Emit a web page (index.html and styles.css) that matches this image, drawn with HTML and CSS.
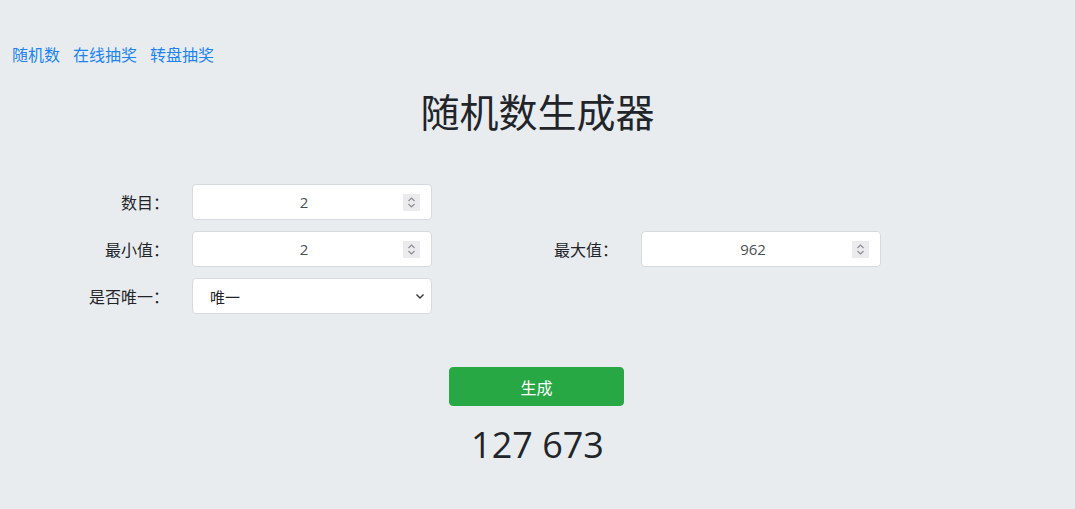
FILE: index.html
```html
<!DOCTYPE html>
<html lang="zh-CN">
<head>
<meta charset="utf-8">
<title>随机数生成器</title>
<link rel="stylesheet" href="styles.css">
</head>
<body>
<nav class="nav">
  <a href="#">随机数</a>
  <a href="#">在线抽奖</a>
  <a href="#">转盘抽奖</a>
</nav>
<h1 class="title">随机数生成器</h1>
<form class="form">
  <label class="label">数目：</label>
  <div class="field">
    <input class="num" type="number" value="2">
    <span class="spin"><svg width="17" height="17" viewBox="0 0 17 17"><path d="M5.5 7 L8.5 4 L11.5 7 M5.5 10 L8.5 13 L11.5 10" fill="none" stroke="#8a8a90" stroke-width="1.1"/></svg></span>
  </div>
  <div class="empty"></div>
  <div class="empty"></div>

  <label class="label">最小值：</label>
  <div class="field">
    <input class="num" type="number" value="2">
    <span class="spin"><svg width="17" height="17" viewBox="0 0 17 17"><path d="M5.5 7 L8.5 4 L11.5 7 M5.5 10 L8.5 13 L11.5 10" fill="none" stroke="#8a8a90" stroke-width="1.1"/></svg></span>
  </div>
  <label class="label">最大值：</label>
  <div class="field">
    <input class="num" type="number" value="962">
    <span class="spin"><svg width="17" height="17" viewBox="0 0 17 17"><path d="M5.5 7 L8.5 4 L11.5 7 M5.5 10 L8.5 13 L11.5 10" fill="none" stroke="#8a8a90" stroke-width="1.1"/></svg></span>
  </div>

  <label class="label">是否唯一：</label>
  <div class="field select-field">
    <select class="sel"><option>唯一</option><option>不唯一</option></select>
    <svg class="chev" width="10" height="8" viewBox="0 0 10 8"><path d="M1.5 2.5 L5 6 L8.5 2.5" fill="none" stroke="#333" stroke-width="1.4"/></svg>
  </div>
</form>
<div class="actions">
  <button class="btn" type="button">生成</button>
</div>
<div class="result">127 673</div>
</body>
</html>
```

FILE: styles.css
```css
html, body {
  margin: 0;
  padding: 0;
}
body {
  background: #e9ecef;
  color: #212529;
  font-family: "Open Sans", "Noto Sans CJK SC", sans-serif;
  font-size: 16px;
  padding-top: 42px;
}
.nav {
  display: flex;
  gap: 13px;
  padding-left: 12px;
  height: 24px;
  line-height: 24px;
}
.nav a {
  color: #1b84f0;
  text-decoration: none;
  font-family: "Noto Sans CJK SC", sans-serif;
  font-size: 16px;
}
.title {
  margin: 20px 0 0;
  font-size: 39px;
  line-height: 48px;
  font-weight: 400;
  text-align: center;
  font-family: "Noto Sans CJK SC", sans-serif;
  color: #212529;
}
.form {
  margin-top: 50px;
  display: grid;
  grid-template-columns: 169px 240px 163px 240px;
  grid-auto-rows: 36px;
  column-gap: 23px;
  row-gap: 11px;
}
.label {
  display: flex;
  align-items: center;
  justify-content: flex-end;
  font-family: "Noto Sans CJK SC", sans-serif;
  font-size: 16px;
  color: #212529;
}
.field {
  display: flex;
  align-items: center;
  background: #fff;
  border: 1px solid #d6dadf;
  border-radius: 4px;
  padding: 0 11px 0 12px;
  box-sizing: border-box;
}
.num {
  flex: 1;
  min-width: 0;
  border: none;
  outline: none;
  background: transparent;
  text-align: center;
  font-family: "Open Sans", sans-serif;
  font-size: 15px;
  color: #495057;
  padding: 0;
  -moz-appearance: textfield;
}
.num::-webkit-inner-spin-button,
.num::-webkit-outer-spin-button {
  -webkit-appearance: none;
  margin: 0;
}
.spin {
  width: 17px;
  height: 17px;
  background: #ebebee;
  display: flex;
}
.select-field {
  padding: 0 6px 0 17px;
}
.sel {
  flex: 1;
  border: none;
  outline: none;
  background: transparent;
  -webkit-appearance: none;
  appearance: none;
  font-family: "Noto Sans CJK SC", sans-serif;
  font-size: 15px;
  color: #212529;
  padding: 0;
}
.chev {
  display: block;
}
.actions {
  margin-top: 53px;
  display: flex;
  justify-content: center;
}
.btn {
  width: 175px;
  height: 39px;
  background: #28a745;
  border: 1px solid #28a745;
  border-radius: 4px;
  color: #fff;
  font-family: "Noto Sans CJK SC", sans-serif;
  font-size: 16px;
  margin-right: 2px;
}
.result {
  margin-top: 17px;
  text-align: center;
  font-family: "Open Sans", sans-serif;
  font-size: 36px;
  line-height: 43px;
  color: #212529;
}
```
